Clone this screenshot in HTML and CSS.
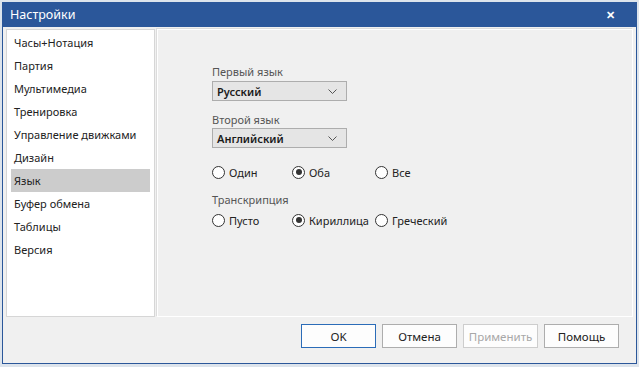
FILE: index.html
```html
<!DOCTYPE html>
<html lang="ru">
<head>
    <meta charset="UTF-8">
    <meta name="viewport" content="width=device-width, initial-scale=1.0">
    <title>Настройки</title>
    <link rel="stylesheet" href="styles.css">
</head>
<body>
    <div class="window">
        <div class="titlebar">
            <span class="title">Настройки</span>
            <span class="close">&#x2715;</span>
        </div>
        <div class="main">
            <ul class="nav">
                <li>Часы+Нотация</li>
                <li>Партия</li>
                <li>Мультимедиа</li>
                <li>Тренировка</li>
                <li>Управление движками</li>
                <li>Дизайн</li>
                <li class="active">Язык</li>
                <li>Буфер обмена</li>
                <li>Таблицы</li>
                <li>Версия</li>
            </ul>
            <div class="panel">
                <div class="label">Первый язык</div>
                <div class="select">
                    <span>Русский</span>
                    <svg width="9" height="5" viewBox="0 0 9 5"><path d="M0.5 0.5 L4.5 4.5 L8.5 0.5" fill="none" stroke="#555" stroke-width="1"/></svg>
                </div>
                <div class="label second">Второй язык</div>
                <div class="select">
                    <span>Английский</span>
                    <svg width="9" height="5" viewBox="0 0 9 5"><path d="M0.5 0.5 L4.5 4.5 L8.5 0.5" fill="none" stroke="#555" stroke-width="1"/></svg>
                </div>
                <div class="radios first-row">
                    <label class="radio"><span class="dot"></span>Один</label>
                    <label class="radio"><span class="dot checked"></span>Оба</label>
                    <label class="radio"><span class="dot"></span>Все</label>
                </div>
                <div class="label trans">Транскрипция</div>
                <div class="radios second-row">
                    <label class="radio"><span class="dot"></span>Пусто</label>
                    <label class="radio"><span class="dot checked"></span>Кириллица</label>
                    <label class="radio"><span class="dot"></span>Греческий</label>
                </div>
            </div>
        </div>
        <div class="buttons">
            <button class="btn default">OK</button>
            <button class="btn">Отмена</button>
            <button class="btn" disabled>Применить</button>
            <button class="btn">Помощь</button>
        </div>
    </div>
</body>
</html>
```

FILE: styles.css
```css
body {
    margin: 0;
    background-color: #dde4ec;
    font-family: 'Noto Sans', 'Open Sans', sans-serif;
    font-size: 11px;
    color: #222;
}
.window {
    margin: 2px 0 0 2px;
    width: 633px;
    height: 361px;
    border: 1px solid #2b579a;
    border-top: none;
    background-color: #f0f0f0;
}
.titlebar {
    height: 25px;
    margin: 0 -1px;
    padding: 0 8px 0 8px;
    background-color: #2b579a;
    color: #fff;
    display: flex;
    align-items: center;
    justify-content: space-between;
}
.title {
    font-size: 12.5px;
}
.close {
    font-size: 11px;
    font-weight: bold;
    margin-right: 14px;
}
.main {
    display: flex;
    gap: 2px;
    padding: 2px 3px 0 3px;
    height: 288px;
}
.nav {
    list-style: none;
    margin: 0;
    padding: 1px 4px;
    width: 139px;
    background-color: #fff;
    border: 1px solid #d6d6d6;
}
.nav li {
    height: 23px;
    line-height: 23px;
    padding-left: 3px;
    white-space: nowrap;
}
.nav li.active {
    background-color: #cccccc;
}
.panel {
    flex: 1;
    border: 1px solid #fff;
    box-shadow: -1px -1px 0 #dcdcdc;
    padding: 34px 0 0 54px;
}
.label {
    line-height: 16px;
    color: #555;
    margin-bottom: 1px;
}
.label.second {
    margin-top: 11px;
    margin-bottom: 0;
}
.select {
    width: 120px;
    height: 18px;
    border: 1px solid #adadad;
    background-color: #e5e5e5;
    padding: 0 9px 0 4px;
    display: flex;
    align-items: center;
    justify-content: space-between;
    font-weight: 600;
    color: #1a1a1a;
}
.radios {
    display: grid;
    grid-template-columns: 80px 83px auto;
    height: 16px;
    align-items: center;
}
.first-row {
    margin-top: 16px;
}
.label.trans {
    margin-top: 12px;
    margin-bottom: 4px;
}
.radio {
    display: flex;
    align-items: center;
    gap: 4px;
}
.dot {
    width: 11px;
    height: 11px;
    border: 1px solid #333;
    border-radius: 50%;
    background-color: #fff;
    display: flex;
    align-items: center;
    justify-content: center;
}
.dot.checked::after {
    content: '';
    width: 6px;
    height: 6px;
    border-radius: 50%;
    background-color: #333;
}
.buttons {
    display: flex;
    justify-content: flex-end;
    gap: 6px;
    padding: 7px 17px 0 0;
}
.btn {
    width: 75px;
    height: 24px;
    font-family: inherit;
    font-size: 11.5px;
    color: #222;
    background-color: #fdfdfd;
    border: 1px solid #adadad;
    padding: 0;
}
.btn.default {
    border-color: #2b6cb8;
}
.btn:disabled {
    color: #a8a8a8;
    border-color: #cdcdcd;
}
```
